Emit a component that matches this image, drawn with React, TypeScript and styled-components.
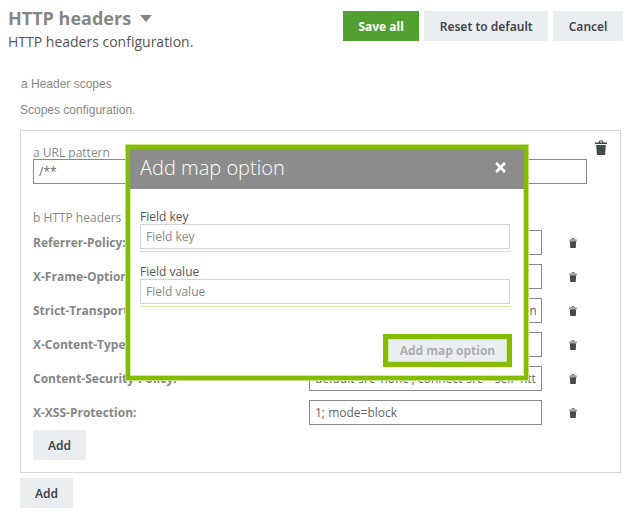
import React from 'react';
import styled, { createGlobalStyle } from 'styled-components';
import { FaTimes } from 'react-icons/fa';

const Global = createGlobalStyle`
  html, body {
    margin: 0;
    background: #fff;
    font-family: "Open Sans", "Noto Sans", sans-serif;
    overflow: hidden;
  }
  * { box-sizing: border-box; }
`;

const Page = styled.div`
  position: relative;
  width: 629px;
  height: 515px;
  overflow: hidden;
  padding: 11px 6px 0 8px;
`;

const Header = styled.header`
  display: flex;
  justify-content: space-between;
  height: 47px;
`;

const TitleBlock = styled.div`
  margin-top: -5px;
`;

const Title = styled.h1`
  display: flex;
  align-items: center;
  gap: 9px;
  margin: 0;
  font-size: 18px;
  line-height: 24px;
  font-weight: 700;
  color: #868686;
`;

const Caret = styled.span`
  width: 0;
  height: 0;
  margin-top: 1px;
  border-left: 6px solid transparent;
  border-right: 6px solid transparent;
  border-top: 7px solid #868686;
`;

const Subtitle = styled.div`
  font-size: 14px;
  line-height: 20px;
  color: #555;
  margin-top: 2px;
`;

const Actions = styled.div`
  display: flex;
  gap: 5px;
`;

const Button = styled.button<{ $primary?: boolean }>`
  height: 30px;
  padding: 0 15.5px;
  border: 0;
  font-family: "Noto Sans", sans-serif;
  font-size: 12px;
  font-weight: ${(p) => (p.$primary ? 700 : 600)};
  background: ${(p) => (p.$primary ? '#52a030' : '#ebeef1')};
  color: ${(p) => (p.$primary ? '#fff' : '#3f4549')};
`;

const Content = styled.div`
  margin-left: 12px;
`;

const ScopeLabel = styled.div`
  font-family: "Liberation Sans", sans-serif;
  font-size: 12px;
  line-height: 16px;
  color: #888;
  margin-top: 18px;
  padding-left: 1px;
`;

const ScopeHelp = styled(ScopeLabel)`
  margin-top: 10px;
  padding-left: 0;
`;

const Panel = styled.section`
  position: relative;
  width: 601px;
  height: 343px;
  margin-top: 12px;
  padding: 15px 33px 0 12px;
  border: 1px solid #d6d9dc;
`;

const FieldCaption = styled.div`
  font-size: 12px;
  line-height: 13px;
  color: #888;
`;

const PatternInput = styled.div`
  height: 25px;
  padding: 0 5px;
  border: 1px solid #8a8a8a;
  font-size: 12px;
  line-height: 23px;
  color: #666;
`;

const HeadersCaption = styled(FieldCaption)`
  margin: 27px 0 6px;
`;

const TrashIcon = styled.svg<{ $big?: boolean }>`
  display: block;
  width: ${(p) => (p.$big ? 12 : 8)}px;
  height: ${(p) => (p.$big ? 15 : 10)}px;
  fill: #44494d;
`;

const ScopeTrash = styled.span`
  position: absolute;
  top: 9px;
  right: 13px;
`;

const Row = styled.div`
  display: grid;
  grid-template-columns: 276px 233px 1fr;
  align-items: center;
  height: 25px;
  margin-bottom: 9px;
`;

const RowName = styled.div`
  font-size: 12px;
  font-weight: 700;
  color: #868686;
  white-space: nowrap;
`;

const RowInput = styled.div`
  height: 25px;
  padding: 0 5px;
  border: 1px solid #8a8a8a;
  font-size: 12px;
  line-height: 23px;
  color: #666;
`;

const RowValue = styled.div`
  height: 23px;
  white-space: nowrap;
  overflow: hidden;
`;

const RowTrash = styled.span`
  display: flex;
  justify-content: center;
  width: 62px;
`;

const AddButton = styled(Button)`
  display: block;
  margin-top: -4px;
  padding: 0 15px;
`;

const OuterAdd = styled(AddButton)`
  margin-top: 5px;
`;

const ModalFrame = styled.div`
  position: absolute;
  left: 125px;
  top: 144px;
  width: 404px;
  height: 237px;
  border: 5px solid #84bd00;
  outline: 1px solid #c5e085;
  outline-offset: -1px;
  box-shadow: inset 0 0 0 1px #d7e8a6;
  background: #fff;
  display: flex;
  flex-direction: column;
`;

const ModalHead = styled.div`
  display: flex;
  align-items: center;
  justify-content: space-between;
  height: 40px;
  padding: 0 16px 4px 10px;
  background: #8c8c8c;
  color: #fff;
`;

const ModalTitle = styled.h2`
  margin: 0;
  font-size: 20px;
  font-weight: 300;
`;

const ModalBody = styled.div`
  flex: 1;
  padding: 20px 14px 0 10px;
  display: flex;
  flex-direction: column;
`;

const Field = styled.div`
  margin-bottom: 12px;
`;

const FieldLabel = styled.label`
  display: block;
  font-size: 12px;
  line-height: 15px;
  color: #555;
`;

const FieldInput = styled.div`
  height: 25px;
  padding: 0 5px;
  border: 1px solid #d0d3d6;
  font-size: 12px;
  line-height: 23px;
  color: #888;
`;

const FieldRule = styled.div`
  height: 1px;
  margin: 2px -1px 0;
  background: #d7e8a6;
`;

const ModalFooter = styled.div`
  display: flex;
  justify-content: flex-end;
  margin: 15px -2px 0 0;
`;

const SubmitButton = styled.button`
  width: 129px;
  height: 33px;
  padding: 0;
  border: 5px solid #84bd00;
  box-shadow: inset 0 0 0 1px #d7e8a6;
  background: #ebeef1;
  color: #aaaeb2;
  font-family: "Open Sans", sans-serif;
  font-size: 12px;
  font-weight: 700;
`;

const rows = [
  { name: 'Referrer-Policy:', value: '' },
  { name: 'X-Frame-Options:', value: '' },
  { name: 'Strict-Transport-Security:', value: 'max-age=31536000; includeSubDomain' },
  { name: 'X-Content-Type-Options:', value: '' },
  { name: 'Content-Security-Policy:', value: "default-src 'none'; connect-src \u00a0\u00a0'self' https" },
  { name: 'X-XSS-Protection:', value: '1; mode=block' },
];

function Trash({ big }: { big?: boolean }) {
  return (
    <TrashIcon $big={big} viewBox="0 0 12 15">
      <path d="M3.6 2.6 4.3.4h3.4l.7 2.2h3.6v1.3H0V2.6zm1.2 0h2.4L6.9 1.5H5.1z" />
      <path d="M1.2 5h9.6l-.7 10H1.9z" />
    </TrashIcon>
  );
}

export default function App() {
  return (
    <Page>
      <Global />
      <Header>
        <TitleBlock>
          <Title>
            HTTP headers <Caret />
          </Title>
          <Subtitle>HTTP headers configuration.</Subtitle>
        </TitleBlock>
        <Actions>
          <Button $primary>Save all</Button>
          <Button>Reset to default</Button>
          <Button>Cancel</Button>
        </Actions>
      </Header>
      <Content>
        <ScopeLabel>a Header scopes</ScopeLabel>
        <ScopeHelp>Scopes configuration.</ScopeHelp>
        <Panel>
          <ScopeTrash>
            <Trash big />
          </ScopeTrash>
          <FieldCaption>a URL pattern</FieldCaption>
          <PatternInput>/**</PatternInput>
          <HeadersCaption>b HTTP headers</HeadersCaption>
          {rows.map((row) => (
            <Row key={row.name}>
              <RowName>{row.name}</RowName>
              <RowInput>
                <RowValue>{row.value}</RowValue>
              </RowInput>
              <RowTrash>
                <Trash />
              </RowTrash>
            </Row>
          ))}
          <AddButton>Add</AddButton>
        </Panel>
        <OuterAdd>Add</OuterAdd>
      </Content>
      <ModalFrame>
        <ModalHead>
          <ModalTitle>Add map option</ModalTitle>
          <FaTimes size={15} />
        </ModalHead>
        <ModalBody>
          <Field>
            <FieldLabel>Field key</FieldLabel>
            <FieldInput>Field key</FieldInput>
            <FieldRule />
          </Field>
          <Field>
            <FieldLabel>Field value</FieldLabel>
            <FieldInput>Field value</FieldInput>
            <FieldRule />
          </Field>
          <ModalFooter>
            <SubmitButton>Add map option</SubmitButton>
          </ModalFooter>
        </ModalBody>
      </ModalFrame>
    </Page>
  );
}
